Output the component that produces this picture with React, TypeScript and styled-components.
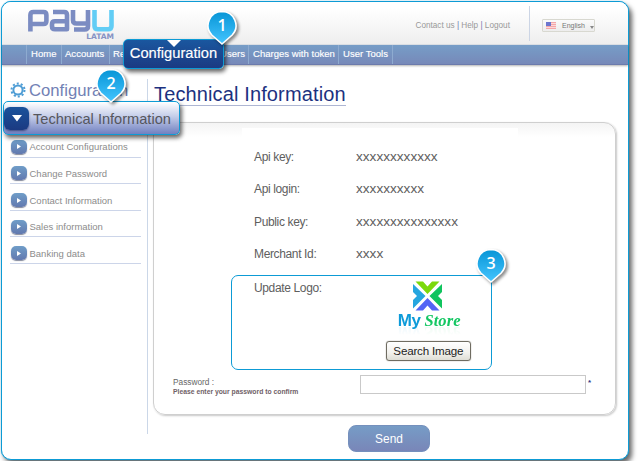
import React from "react";
import styled, { createGlobalStyle } from "styled-components";

const Global = createGlobalStyle`
  * { box-sizing: border-box; }
  body { margin: 0; background: #fff; font-family: "Liberation Sans", Arial, sans-serif; }
  button, input { font-family: inherit; margin: 0; padding: 0; }
`;

const Frame = styled.div`
  position: relative;
  width: 628px;
  height: 459px;
  margin: 1px;
  border: 1px solid #0d9bd5;
  border-radius: 10px;
  background: #fff;
  box-shadow: 0 0 1px #0d9bd5, 3px 4px 5px rgba(0, 0, 0, 0.6);
`;

const Header = styled.header`
  display: flex;
  height: 43px;
  padding: 0 33px 0 26px;
  border-radius: 9px 9px 0 0;
  background: linear-gradient(#fff 15%, #eeeeee);
  border-bottom: 1px solid #dfe3e8;
`;

const Brand = styled.div`
  width: 87px;
  height: 40px;
  padding-top: 6px;
`;

const Region = styled.div`
  padding-right: 1px;
  font: bold 7.5px/8px "DejaVu Sans", sans-serif;
  letter-spacing: 0;
  text-align: right;
  color: #8592c4;
`;

const Utility = styled.div`
  margin-left: 300.5px;
  padding-top: 18px;
  width: 116px;
  font-size: 8.2px;
  line-height: 12px;
  color: #999;
  white-space: nowrap;
  span { color: #6c79b0; }
`;

const Language = styled.div`
  height: 35px;
  margin-top: 4px;
  padding: 13px 0 0 12px;
  border-left: 1px solid #ccd5e5;
`;

const LanguageButton = styled.button`
  display: flex;
  align-items: center;
  width: 53px;
  height: 13px;
  padding-left: 3px;
  border: 1px solid #d8d8d0;
  border-radius: 1px;
  background: linear-gradient(#fbfbfb, #ededed);
  font-size: 7px;
  color: #777;
  span { margin: 0 5px 0 6px; }
`;

const Nav = styled.nav`
  display: flex;
  height: 20px;
  padding-left: 24px;
  background: linear-gradient(#769dc7, #7789b9);
  border-bottom: 1px solid #6c7bad;
  box-shadow: 0 1px 2px rgba(0, 0, 0, 0.3);
`;

const NavItem = styled.a<{ $w: number; $pad?: number }>`
  width: ${(p) => p.$w}px;
  padding-left: ${(p) => p.$pad ?? 4}px;
  border-left: 1px solid #8eabd0;
  color: #fff;
  font-size: 9.5px;
  line-height: 18px;
  letter-spacing: 0.03px;
  -webkit-text-stroke: 0.15px #fff;
  white-space: nowrap;
  overflow: hidden;
`;

const ActiveTab = styled.div`
  position: absolute;
  left: 121px;
  top: 37px;
  width: 101px;
  height: 30px;
  border: 1px solid #0d9bd5;
  border-radius: 5px;
  background: linear-gradient(#1a579f, #1b3a82);
  box-shadow: 2px 3px 4px rgba(0, 0, 0, 0.6);
  color: #fff;
  font-size: 14.7px;
  line-height: 26px;
  text-align: center;
  -webkit-text-stroke: 0.15px #fff;
  svg { position: absolute; left: 43px; top: 0; }
`;

const Body = styled.div`
  display: flex;
  height: 369px;
  padding-top: 14px;
`;

const Sidebar = styled.aside`
  width: 146px;
  padding: 0 6px 0 8px;
  border-right: 1px solid #cbd7e8;
`;

const SideHeading = styled.h2`
  display: flex;
  align-items: center;
  gap: 3px;
  height: 24px;
  margin: 0;
  font-size: 16.7px;
  font-weight: 400;
  color: #7281b5;
  svg { margin-top: -3px; }
`;

const ActiveItem = styled.div`
  position: relative;
  z-index: 2;
  display: flex;
  align-items: center;
  gap: 4px;
  width: 177px;
  height: 34px;
  margin: -2px 0 0 -7px;
  padding-top: 2px;
  border: 1px solid #0d9bd5;
  border-radius: 5px;
  background: linear-gradient(#fff, #c4cde9 45%, #7180c0);
  box-shadow: 2px 3px 4px rgba(0, 0, 0, 0.6);
  color: #55565d;
  font-size: 14.6px;
  white-space: nowrap;
`;

const ActiveIcon = styled.span`
  display: flex;
  justify-content: center;
  align-items: center;
  width: 25px;
  height: 23px;
  margin-top: -2px;
  border-radius: 6px;
  background: linear-gradient(#1a529b, #1b3a82);
  box-shadow: 0 1px 2px rgba(20, 30, 80, 0.6);
`;

const SideList = styled.div`
  display: grid;
  gap: 6.15px;
  padding-top: 2px;
`;

const SideItem = styled.a`
  display: flex;
  align-items: center;
  gap: 2.5px;
  height: 20.5px;
  border-bottom: 1px solid #ccd5e9;
  font-size: 9.5px;
  color: #8c8c8c;
`;

const SideIcon = styled.span`
  display: flex;
  justify-content: center;
  align-items: center;
  width: 16px;
  height: 14px;
  margin-left: 1px;
  border-radius: 5px;
  background: linear-gradient(#6f9dc8, #6279af);
  box-shadow: 0 1px 1px rgba(50, 60, 90, 0.6);
`;

const Main = styled.main`
  padding-left: 5px;
  width: 468px;
`;

const Title = styled.h1`
  width: 193px;
  height: 27px;
  margin: 0 0 16px;
  padding-left: 1px;
  border-bottom: 1px solid #aeb6d3;
  font-size: 20px;
  font-weight: 400;
  line-height: 30px;
  letter-spacing: 0.13px;
  color: #1c317f;
  white-space: nowrap;
`;

const Card = styled.section`
  width: 463px;
  height: 293px;
  border: 1px solid #cfcfcf;
  border-radius: 12px;
  background: linear-gradient(#f4f4f4, #fff 14px);
  box-shadow: 1px 1px 2px rgba(0, 0, 0, 0.22);
`;

const BlankStrip = styled.div`
  width: 276px;
  height: 10px;
  margin: 5px 0 0 88px;
  background: #fff;
`;

const Fields = styled.dl`
  display: grid;
  grid-template-columns: 102px auto;
  grid-auto-rows: 32.5px;
  margin: 2px 0 0 100px;
  align-items: center;
  color: #5e5e5e;
`;

const Label = styled.dt`
  font-size: 12px;
  letter-spacing: -0.36px;
  line-height: 14px;
  padding-top: 0.5px;
  color: #5e5e5e;
`;

const Value = styled.dd`
  margin: 0;
  padding-top: 1px;
  font-size: 13.6px;
  line-height: 14px;
`;

const LogoPanel = styled.div`
  display: flex;
  width: 261px;
  height: 95px;
  margin: 5px 0 0 77px;
  border: 1px solid #0d9bd5;
  border-radius: 7px;
  padding: 4px 0 0 22px;
`;

const StoreColumn = styled.div`
  display: flex;
  flex-direction: column;
  align-items: center;
  width: 84px;
  margin-left: 63px;
  padding-top: 1px;
`;

const StoreName = styled.div`
  height: 20px;
  margin-left: 5px;
  font: bold 17px/20px "Liberation Sans", sans-serif;
  color: #0d9bd9;
  white-space: nowrap;
  letter-spacing: -0.6px;
  -webkit-box-reflect: below -9px linear-gradient(transparent 35%, rgba(0, 0, 0, 0.13));
  i { font: italic bold 16.5px/20px "Liberation Serif", serif; letter-spacing: 0.1px; color: #14c763; }
`;

const SearchButton = styled.button`
  width: 85px;
  height: 20px;
  margin: 10px 0 0 3px;
  border: 1.5px solid #6f6c61;
  border-radius: 3px;
  background: linear-gradient(#fff, #f2f1ed 60%, #deddd5);
  box-shadow: 0 0 1px #6f6c61;
  color: #222;
  font-size: 11.6px;
  letter-spacing: -0.2px;
  line-height: 16px;
  white-space: nowrap;
`;

const PasswordRow = styled.div`
  display: grid;
  grid-template-columns: 187px 226px auto;
  column-gap: 0;
  margin: 5px 0 0 19px;
`;

const PasswordLabel = styled.label`
  font-size: 8.3px;
  line-height: 10px;
  padding-top: 1.5px;
  color: #666;
  strong { display: block; font-size: 6.8px; line-height: 9px; color: #705f67; white-space: nowrap; }
`;

const PasswordInput = styled.input`
  width: 226px;
  height: 19px;
  border: 1px solid #c9c9c9;
  background: #fff;
`;

const Required = styled.span`
  margin-left: 2px;
  padding-top: 2px;
  font-size: 8px;
  font-weight: bold;
  line-height: 12px;
  color: #303b85;
`;

const SendButton = styled.button`
  display: block;
  width: 82px;
  height: 27px;
  margin: 10px 0 0 195px;
  border: 1px solid #7590bd;
  border-radius: 8px;
  background: linear-gradient(#769cc6, #7986b8);
  color: #fff;
  font-size: 11.9px;
`;

const PinBox = styled.div<{ $x: number; $y: number }>`
  position: absolute;
  z-index: 4;
  left: ${(p) => p.$x}px;
  top: ${(p) => p.$y}px;
  width: 32px;
  height: 38px;
  color: #fff;
  font: 600 16px/30px "Open Sans", sans-serif;
  text-align: center;
  span { position: relative; }
`;

const PinShape = styled.svg`
  position: absolute;
  left: 0;
  top: 0;
  filter: drop-shadow(2px 2px 1.5px rgba(0, 0, 0, 0.45));
`;

function Pin({ n, x, y }: { n: number; x: number; y: number }) {
  return (
    <PinBox $x={x} $y={y}>
      <PinShape width="36" height="40" viewBox="0 0 36 40">
        <defs>
          <linearGradient id={`pin${n}`} x1="0" y1="0" x2="0" y2="1">
            <stop offset="0" stopColor="#0795d6" />
            <stop offset="1" stopColor="#45c5ff" />
          </linearGradient>
        </defs>
        <path
          d="M16 1.5a14 14 0 0 0-10.200 23.500L16 34l10.200-9A14 14 0 0 0 16 1.500Z"
          fill={`url(#pin${n})`}
          stroke="#fff"
          strokeWidth="1.6"
        />
      </PinShape>
      <span>{n}</span>
    </PinBox>
  );
}

const LogoMark = styled.svg`
  display: block;
`;

const Caret = styled.svg`
  margin-top: 4px;
`;

const fields = [
  ["Api key:", "xxxxxxxxxxxx"],
  ["Api login:", "xxxxxxxxxx"],
  ["Public key:", "xxxxxxxxxxxxxxx"],
  ["Merchant Id:", "xxxx"],
];

const sideItems = ["Account Configurations", "Change Password", "Contact Information", "Sales information", "Banking data"];

export default function App() {
  return (
    <>
      <Global />
      <Frame>
        <Header>
          <Brand>
            <LogoMark width="87" height="25" viewBox="0 0 87 25" fill="none" strokeWidth="4.600" strokeLinejoin="round" aria-label="PayU">
              <g stroke="#7b8cc2">
                <path d="M2.400 23.500V7q0-3 3-3h10q3 0 3 3v6q0 3-3 3H3" />
                <path d="M25 4h11q3 0 3 3v14.200H27q-3 0-3-3v-2q0-3 3-3h12" />
                <path d="M45 2v10q0 3.500 3.500 3.500H60M60 2v16q0 3.500-3.500 3.500H46" />
              </g>
              <path d="M66.500 2v16q0 3.200 3.500 3.200h10q3.500 0 3.500-3.200V2" stroke="#62cdf5" />
            </LogoMark>
            <Region>LATAM</Region>
          </Brand>
          <Utility>Contact us <span>|</span> Help <span>|</span> Logout</Utility>
          <Language>
            <LanguageButton>
              <svg width="10" height="7" viewBox="0 0 10 7">
                <path fill="#fbd9d9" d="M0 0h10v7H0z" />
                <path stroke="#f4a6a9" d="M0 .5h10M0 2.500h10M0 4.500h10M0 6.500h10" />
                <path fill="#6c76ce" d="M0 0h5v4H0z" />
              </svg>
              <span>English</span>
              <Caret width="4" height="3" viewBox="0 0 4 3"><path fill="#888" d="M0 0h4L2 3z" /></Caret>
            </LanguageButton>
          </Language>
        </Header>
        <Nav>
          <NavItem $w={35}>Home</NavItem>
          <NavItem $w={48} $pad={3}>Accounts</NavItem>
          <NavItem $w={104} $pad={3}>Reports</NavItem>
          <NavItem $w={35} $pad={6}>Users</NavItem>
          <NavItem $w={90}>Charges with token</NavItem>
          <NavItem $w={54}>User Tools</NavItem>
          <NavItem $w={10} />
        </Nav>
        <Body>
          <Sidebar>
            <SideHeading>
              <svg width="16" height="16" viewBox="0 0 16 16" fill="none" stroke="#4f9dd5">
                <circle cx="8" cy="8" r="4.600" strokeWidth="2" />
                <circle cx="8" cy="8" r="6.500" strokeWidth="2" strokeDasharray="2.040 2.040" />
              </svg>
              Configuration
            </SideHeading>
            <ActiveItem>
              <ActiveIcon>
                <svg width="10" height="7" viewBox="0 0 10 7"><path fill="#fff" d="M0 0h10L5 6.500z" /></svg>
              </ActiveIcon>
              Technical Information
            </ActiveItem>
            <SideList>
              {sideItems.map((t) => (
                <SideItem key={t}>
                  <SideIcon>
                    <svg width="4" height="5" viewBox="0 0 4 5"><path fill="#fff" d="M0 0l4 2.500L0 5z" /></svg>
                  </SideIcon>
                  {t}
                </SideItem>
              ))}
            </SideList>
          </Sidebar>
          <Main>
            <Title>Technical Information</Title>
            <Card>
              <BlankStrip />
              <Fields>
                {fields.map(([k, v]) => (
                  <React.Fragment key={k}>
                    <Label>{k}</Label>
                    <Value>{v}</Value>
                  </React.Fragment>
                ))}
              </Fields>
              <LogoPanel>
                <Label as="div">Update Logo:</Label>
                <StoreColumn>
                  <svg width="30" height="30" viewBox="0 0 30 30">
                    <path fill="#7bd90b" d="M3.500 .5h7.500l4.500 5 4.500-5h7.500L15.500 13z" />
                    <path fill="#25a5df" d="M1 3l12.500 12L1 27.500v-8.500l4-4-4-4z" />
                    <path fill="#10c45e" d="M30 3v8l-4 4 4 4v8.500L17.500 15z" />
                    <path fill="#5264f5" d="M3.500 29.500L15.500 17 27.500 29.500h-7.500l-4.500-5-4.500 5z" />
                  </svg>
                  <StoreName>My <i>Store</i></StoreName>
                  <SearchButton>Search Image</SearchButton>
                </StoreColumn>
              </LogoPanel>
              <PasswordRow>
                <PasswordLabel htmlFor="password">
                  Password :
                  <strong>Please enter your password to confirm</strong>
                </PasswordLabel>
                <PasswordInput id="password" type="password" />
                <Required>*</Required>
              </PasswordRow>
            </Card>
            <SendButton>Send</SendButton>
          </Main>
        </Body>
        <ActiveTab>
          <svg width="14" height="7" viewBox="0 0 14 7"><path fill="#fff" d="M0 0h14L7 7z" /></svg>
          Configuration
        </ActiveTab>
        <Pin n={1} x={204} y={8} />
        <Pin n={2} x={93} y={66} />
        <Pin n={3} x={473} y={246} />
      </Frame>
    </>
  );
}
